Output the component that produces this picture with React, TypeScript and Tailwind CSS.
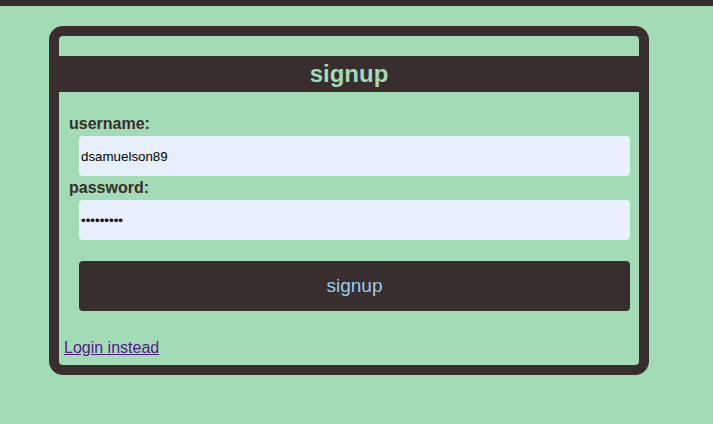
import React, { useState } from "react";

export default function App() {
  const [username, setUsername] = useState("dsamuelson89");
  const [password, setPassword] = useState("123456789");

  return (
    <div className="min-h-[424px] w-full bg-[#a2dbb5] font-['Liberation_Sans',Arial,sans-serif] text-[#382e2e]">
      <div className="h-[6px] w-full bg-[#382e2e]" />

      <div className="mt-[20px] ml-[49px] w-[600px] rounded-[14px] border-[10px] border-[#382e2e]">
        <h2 className="mt-[20px] flex h-[36px] items-center justify-center bg-[#382e2e] text-[24px] leading-[36px] font-bold text-[#a2dbb5]">
          signup
        </h2>

        <form
          className="flex flex-col pr-[9px] pl-[10px]"
          onSubmit={(event) => event.preventDefault()}
        >
          <label className="mt-[23px] text-[16px] leading-[18px] font-bold">
            username:
          </label>
          <input
            className="mt-[3px] ml-[10px] h-[40px] rounded-[4px] bg-[#e8f0fe] px-[2px] text-[13.33px] text-black outline-none"
            value={username}
            onChange={(event) => setUsername(event.target.value)}
          />

          <label className="mt-[3px] text-[16px] leading-[18px] font-bold">
            password:
          </label>
          <input
            type="password"
            className="mt-[3px] ml-[10px] h-[40px] rounded-[4px] bg-[#e8f0fe] px-[2px] text-[13.33px] text-black outline-none"
            value={password}
            onChange={(event) => setPassword(event.target.value)}
          />

          <button
            type="submit"
            className="mt-[21px] ml-[10px] h-[50px] cursor-pointer rounded-[4px] bg-[#382e2e] text-[19px] text-[#9ccbee]"
          >
            signup
          </button>
        </form>

        <div className="mt-[28px] pb-[8px] pl-[5px] text-[16px] leading-[18px]">
          <a href="#" className="text-[#551a8b] underline">
            Login instead
          </a>
        </div>
      </div>
    </div>
  );
}
